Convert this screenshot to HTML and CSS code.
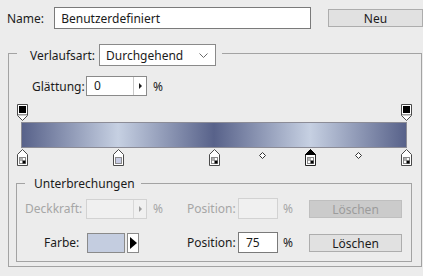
FILE: index.html
```html
<!DOCTYPE html>
<html lang="de">
<head>
    <meta charset="UTF-8">
    <meta name="viewport" content="width=device-width, initial-scale=1.0">
    <title>Verläufe bearbeiten</title>
    <link rel="stylesheet" href="styles.css">
</head>
<body>
    <div class="dialog">
        <div class="name-row">
            <label class="name-label">Name:</label>
            <input type="text" class="name-input" value="Benutzerdefiniert">
            <button class="button new-button">Neu</button>
        </div>

        <fieldset class="group outer-group">
            <legend class="group-title select-title">
                <span class="type-label">Verlaufsart:</span>
                <span class="select">
                    <span>Durchgehend</span>
                    <svg class="chevron" width="9" height="5" viewBox="0 0 9 5"><path d="M0.5 0.5 L4.5 4.5 L8.5 0.5" fill="none" stroke="#6a6a6a"/></svg>
                </span>
            </legend>

            <div class="smooth-row">
                <span class="smooth-label">Glättung:</span>
                <span class="spin">
                    <span class="spin-value">0</span>
                    <span class="spin-arrow"><i class="tri"></i></span>
                </span>
                <span class="unit">%</span>
            </div>

            <div class="ramp">
                <div class="stops stops-top">
                    <svg class="stop" style="left: 0%" width="11" height="17" viewBox="0 0 11 17">
                        <path d="M0.5 0.5 H10.5 V11.5 L5.5 16.5 L0.5 11.5 Z" fill="#fff" stroke="#4a4a4a"/>
                        <rect x="2" y="2" width="7" height="7" fill="#000"/>
                        <rect x="1" y="10" width="9" height="1.5" fill="#9a9a9a"/>
                    </svg>
                    <svg class="stop" style="left: 100%" width="11" height="17" viewBox="0 0 11 17">
                        <path d="M0.5 0.5 H10.5 V11.5 L5.5 16.5 L0.5 11.5 Z" fill="#fff" stroke="#4a4a4a"/>
                        <rect x="2" y="2" width="7" height="7" fill="#000"/>
                        <rect x="1" y="10" width="9" height="1.5" fill="#9a9a9a"/>
                    </svg>
                </div>
                <div class="bar"></div>
                <div class="stops stops-bottom">
                    <svg class="stop" style="left: 0%" width="11" height="17" viewBox="0 0 11 17">
                        <path d="M5.5 0.5 L10.5 5.5 V16.5 H0.5 V5.5 Z" fill="#fff" stroke="#4a4a4a"/>
                        <rect x="2.5" y="8.5" width="6" height="6" fill="#fff" stroke="#8a8a8a"/>
                        <rect x="3" y="9" width="3" height="3" fill="#b0b0b0"/>
                        <rect x="5.5" y="11.5" width="3" height="3" fill="#000"/>
                    </svg>
                    <svg class="stop" style="left: 25%" width="11" height="17" viewBox="0 0 11 17">
                        <path d="M5.5 0.5 L10.5 5.5 V16.5 H0.5 V5.5 Z" fill="#fff" stroke="#4a4a4a"/>
                        <rect x="2.5" y="8.5" width="6" height="6" fill="#c8cce4" stroke="#8a8a8a"/>
                    </svg>
                    <svg class="stop" style="left: 50%" width="11" height="17" viewBox="0 0 11 17">
                        <path d="M5.5 0.5 L10.5 5.5 V16.5 H0.5 V5.5 Z" fill="#fff" stroke="#4a4a4a"/>
                        <rect x="2.5" y="8.5" width="6" height="6" fill="#fff" stroke="#8a8a8a"/>
                        <rect x="3" y="9" width="3" height="3" fill="#b0b0b0"/>
                        <rect x="5.5" y="11.5" width="3" height="3" fill="#000"/>
                    </svg>
                    <svg class="midpoint" style="left: 62.5%" width="7" height="7" viewBox="0 0 7 7">
                        <path d="M3.5 0.5 L6.5 3.5 L3.5 6.5 L0.5 3.5 Z" fill="#fff" stroke="#333"/>
                    </svg>
                    <svg class="stop" style="left: 75%" width="11" height="17" viewBox="0 0 11 17">
                        <path d="M5.5 0.5 L10.5 5.5 V16.5 H0.5 V5.5 Z" fill="#fff" stroke="#222"/>
                        <path d="M5.5 0.5 L10.5 5.5 H0.5 Z" fill="#000" stroke="#000"/>
                        <rect x="2.5" y="8.5" width="6" height="6" fill="#fff" stroke="#8a8a8a"/>
                        <rect x="3" y="9" width="3" height="3" fill="#b0b0b0"/>
                        <rect x="5.5" y="11.5" width="3" height="3" fill="#000"/>
                    </svg>
                    <svg class="midpoint" style="left: 87.5%" width="7" height="7" viewBox="0 0 7 7">
                        <path d="M3.5 0.5 L6.5 3.5 L3.5 6.5 L0.5 3.5 Z" fill="#fff" stroke="#333"/>
                    </svg>
                    <svg class="stop" style="left: 100%" width="11" height="17" viewBox="0 0 11 17">
                        <path d="M5.5 0.5 L10.5 5.5 V16.5 H0.5 V5.5 Z" fill="#fff" stroke="#4a4a4a"/>
                        <rect x="2.5" y="8.5" width="6" height="6" fill="#fff" stroke="#8a8a8a"/>
                        <rect x="3" y="9" width="3" height="3" fill="#b0b0b0"/>
                        <rect x="5.5" y="11.5" width="3" height="3" fill="#000"/>
                    </svg>
                </div>
            </div>

            <fieldset class="group inner-group">
                <legend class="group-title stops-title">Unterbrechungen</legend>

                <div class="stop-row disabled">
                    <span class="row-label opacity-label">Deckkraft:</span>
                    <span class="spin">
                        <span class="spin-value"></span>
                        <span class="spin-arrow"><i class="tri"></i></span>
                    </span>
                    <span class="unit">%</span>
                    <span class="pos-label">Position:</span>
                    <span class="field"></span>
                    <span class="unit unit-pos">%</span>
                    <button class="button delete-button" disabled>Löschen</button>
                </div>

                <div class="stop-row">
                    <span class="row-label color-label">Farbe:</span>
                    <span class="swatch"></span>
                    <span class="swatch-arrow"><i class="tri-big"></i></span>
                    <span class="pos-label">Position:</span>
                    <span class="field">75</span>
                    <span class="unit unit-pos">%</span>
                    <button class="button delete-button">Löschen</button>
                </div>
            </fieldset>
        </fieldset>
    </div>
</body>
</html>
```

FILE: styles.css
```css
body {
    margin: 0;
    background-color: #ececec;
    font-family: 'Noto Sans', 'DejaVu Sans', sans-serif;
    font-size: 12px;
    color: #1b1b1b;
    overflow: hidden;
}
.dialog {
    width: 423px;
    padding-top: 7px;
}
.name-row {
    display: flex;
    align-items: center;
    height: 22px;
    padding-left: 7px;
}
.name-label {
    width: 48px;
}
.name-input {
    box-sizing: border-box;
    width: 261px;
    height: 22px;
    margin: 0;
    padding: 0 6px;
    border: 1px solid #7a7a7a;
    background-color: #ffffff;
    font: inherit;
    color: #1b1b1b;
}
.button {
    box-sizing: border-box;
    border: 1px solid #adadad;
    background-color: #e1e1e1;
    font: inherit;
    color: #1b1b1b;
    padding: 0;
}
.new-button {
    width: 95px;
    height: 18px;
    margin-left: 17px;
    flex-shrink: 0;
}

/* group boxes */
.group {
    margin: 0;
    padding: 0;
    border: 1px solid #a3a3a3;
    min-width: 0;
}
.outer-group {
    width: 414px;
    box-sizing: border-box;
    margin: 11px 0 0 8px;
    padding-bottom: 4px;
}
.group-title {
    display: flex;
    align-items: center;
}
.select-title {
    margin-left: 8px;
    padding: 4px 6px 0 13px;
}
.type-label {
    margin-right: 4px;
}
.select {
    box-sizing: border-box;
    display: flex;
    align-items: center;
    justify-content: space-between;
    width: 117px;
    height: 22px;
    padding: 0 7px 0 6px;
    border: 1px solid #8a8a8a;
    background-color: #ffffff;
}
.chevron {
    display: block;
}

/* smoothing */
.smooth-row {
    display: flex;
    align-items: center;
    height: 20px;
    margin-top: 10px;
    padding-left: 23px;
}
.smooth-label {
    width: 54px;
}
.spin {
    box-sizing: border-box;
    display: flex;
    width: 61px;
    height: 20px;
    border: 1px solid #8a8a8a;
    background-color: #ffffff;
}
.spin-value {
    width: 39px;
    padding-left: 7px;
    line-height: 18px;
    border-right: 1px solid #c8c8c8;
}
.spin-arrow {
    flex: 1;
    display: flex;
    align-items: center;
    justify-content: center;
}
.tri {
    width: 0;
    height: 0;
    border-top: 3px solid transparent;
    border-bottom: 3px solid transparent;
    border-left: 3px solid #1b1b1b;
}
.unit {
    margin-left: 6px;
}

/* gradient ramp */
.ramp {
    width: 386px;
    margin: 8px 0 0 12px;
}
.stops {
    position: relative;
    height: 17px;
    margin: 0 1px;
}
.stop {
    position: absolute;
    top: 0;
    margin-left: -5px;
    display: block;
}
.midpoint {
    position: absolute;
    top: 3px;
    margin-left: -3px;
    display: block;
}
.bar {
    box-sizing: border-box;
    height: 26px;
    margin: 1px 0;
    border: 1px solid #8c8c96;
    background: linear-gradient(to right, #58628a 0%, #c6d0e2 25%, #58628a 50%, #c6d0e2 75%, #58628a 100%);
}

/* stops group */
.inner-group {
    width: 396px;
    box-sizing: border-box;
    margin: 9px 0 0 7px;
    padding-bottom: 8px;
}
.stops-title {
    margin-left: 8px;
    padding: 0 6px 0 9px;
    line-height: 17px;
}
.stop-row {
    display: flex;
    align-items: center;
    height: 21px;
    margin-top: 6px;
}
.stop-row + .stop-row {
    margin-top: 13px;
}
.row-label {
    box-sizing: border-box;
    width: 69px;
}
.opacity-label {
    padding-left: 8px;
}
.color-label {
    padding-left: 27px;
}
.disabled {
    color: #a6a6a6;
}
.disabled .spin {
    border-color: #d2d2d2;
    background-color: #f0f0f0;
}
.disabled .spin-value {
    border-right-color: #d8d8d8;
}
.disabled .tri {
    border-left-color: #9a9a9a;
}
.pos-label {
    margin-left: 24px;
    width: 51px;
}
.stop-row:not(.disabled) .pos-label {
    margin-left: 48px;
}
.field {
    box-sizing: border-box;
    width: 40px;
    height: 21px;
    padding-left: 7px;
    line-height: 19px;
    border: 1px solid #7a7a7a;
    background-color: #ffffff;
}
.disabled .field {
    border-color: #d2d2d2;
    background-color: #f0f0f0;
}
.unit-pos {
    margin-left: 5px;
    width: 26px;
}
.swatch {
    box-sizing: border-box;
    width: 38px;
    height: 20px;
    margin-left: 1px;
    border: 1px solid #8a8a8a;
    background-color: #c4cde0;
}
.swatch-arrow {
    box-sizing: border-box;
    display: flex;
    align-items: center;
    justify-content: center;
    width: 12px;
    height: 20px;
    margin-left: 2px;
    border: 1px solid #8a8a8a;
    background-color: #ffffff;
}
.tri-big {
    width: 0;
    height: 0;
    border-top: 6px solid transparent;
    border-bottom: 6px solid transparent;
    border-left: 7px solid #000000;
}
.delete-button {
    width: 93px;
    height: 18px;
}
.delete-button:disabled {
    background-color: #cbcbcb;
    border-color: #bfbfbf;
    color: #9c9c9c;
}
```
